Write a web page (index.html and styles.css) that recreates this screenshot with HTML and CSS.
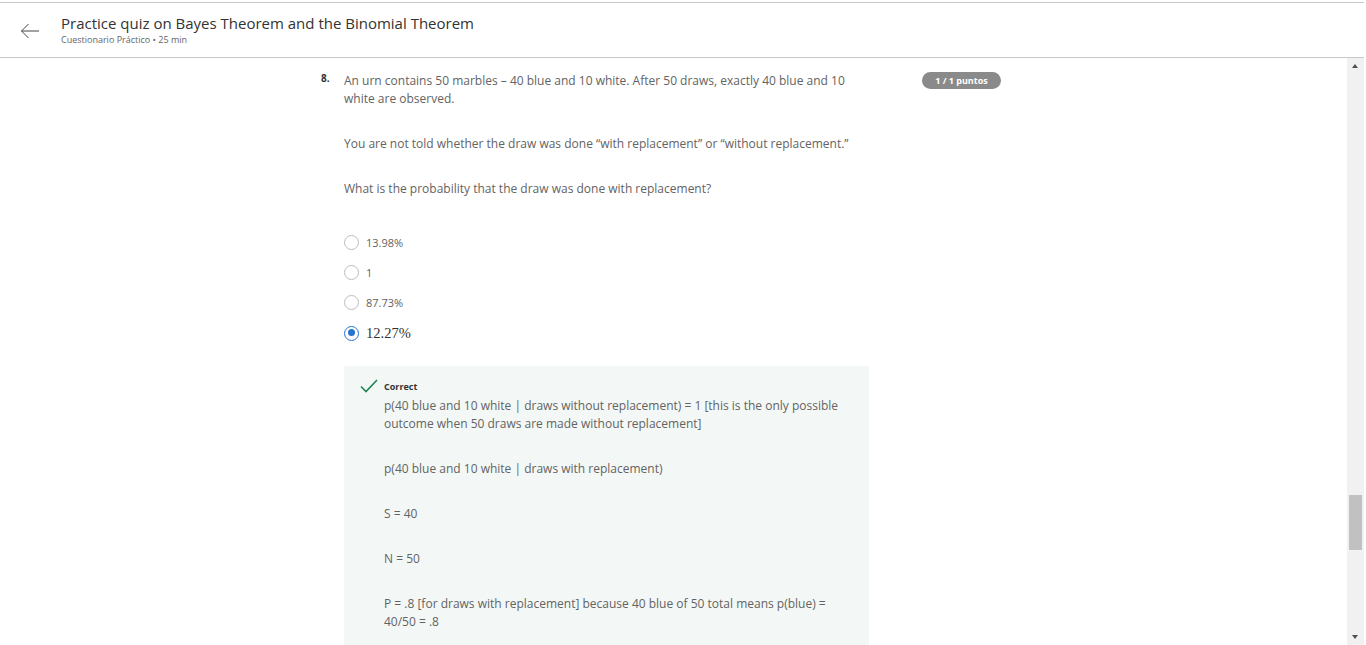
FILE: index.html
```html
<!DOCTYPE html>
<html lang="es">
<head>
<meta charset="utf-8">
<title>Practice quiz</title>
<link rel="stylesheet" href="styles.css">
</head>
<body>
<div class="page">
  <header class="topbar">
    <button class="back" aria-label="Back">
      <svg width="20" height="16" viewBox="0 0 20 16"><path d="M19 8H1.5M8.5 1L1.5 8l7 7" fill="none" stroke="#444" stroke-width="1"/></svg>
    </button>
    <div class="titles">
      <h1 class="title">Practice quiz on Bayes Theorem and the Binomial Theorem</h1>
      <div class="subtitle">Cuestionario Práctico • 25 min</div>
    </div>
  </header>
  <div class="main">
    <div class="content">
      <div class="question">
        <div class="qnum">8.</div>
        <div class="qbody">
          <p class="para">An urn contains 50 marbles – 40 blue and 10 white. After 50 draws, exactly 40 blue and 10 white are observed.</p>
          <p class="para">You are not told whether the draw was done “with replacement” or “without replacement.”</p>
          <p class="para">What is the probability that the draw was done with replacement?</p>
          <div class="options">
            <label class="option"><span class="radio"></span><span class="opt-text">13.98%</span></label>
            <label class="option"><span class="radio"></span><span class="opt-text">1</span></label>
            <label class="option"><span class="radio"></span><span class="opt-text">87.73%</span></label>
            <label class="option"><span class="radio checked"></span><span class="opt-text math">12.27%</span></label>
          </div>
          <div class="feedback">
            <svg class="check" width="18" height="14" viewBox="0 0 18 14"><path d="M1 7.5l5 5L17 1" fill="none" stroke="#1f8354" stroke-width="1.6"/></svg>
            <div class="fb-body">
              <div class="fb-label">Correct</div>
              <p class="fb-para">p(40 blue and 10 white | draws without replacement) = 1 [this is the only possible outcome when 50 draws are made without replacement]</p>
              <p class="fb-para">p(40 blue and 10 white | draws with replacement)</p>
              <p class="fb-para">S = 40</p>
              <p class="fb-para">N = 50</p>
              <p class="fb-para">P = .8 [for draws with replacement] because 40 blue of 50 total means p(blue) = 40/50 = .8</p>
            </div>
          </div>
        </div>
        <div class="badge-col"><span class="badge">1 / 1 puntos</span></div>
      </div>
    </div>
    <div class="scrollbar">
      <div class="arrow up"></div>
      <div class="track"><div class="thumb"></div></div>
      <div class="arrow down"></div>
    </div>
  </div>
</div>
</body>
</html>
```
FILE: styles.css
```css
* { box-sizing: border-box; }
html, body { margin: 0; padding: 0; background: #fff; }
body {
  font-family: "Open Sans", "Noto Sans", sans-serif;
  color: #636363;
  overflow: hidden;
}
.page {
  width: 1364px;
  height: 645px;
  padding-top: 2px;
  display: flex;
  flex-direction: column;
}
.topbar {
  height: 56px;
  border-top: 1px solid #c8c8c8;
  border-bottom: 1px solid #c8c8c8;
  display: flex;
  align-items: center;
  flex-shrink: 0;
}
.back {
  border: 0;
  background: none;
  padding: 0;
  margin-left: 20px;
  width: 20px;
  height: 16px;
  display: flex;
  margin-top: 2px;
}
.titles { margin-left: 21px; margin-top: 0; }
.title {
  margin: 0;
  font-size: 15px;
  font-weight: 400;
  color: #333;
  line-height: 19px;
}
.subtitle {
  font-size: 9px;
  color: #666;
  line-height: 13px;
}
.main {
  flex: 1;
  display: flex;
  min-height: 0;
}
.content {
  flex: 1;
  overflow: hidden;
}
.question {
  display: flex;
  padding-left: 321px;
  padding-top: 14px;
}
.qnum {
  width: 23px;
  font-size: 10px;
  font-weight: 700;
  color: #333;
  line-height: 18px;
  margin-top: -3px;
}
.qbody { width: 525px; }
.para {
  margin: 0 0 27px;
  font-size: 12px;
  line-height: 18px;
  padding-right: 14px;
}
.options { padding-top: 2px; }
.option {
  display: flex;
  align-items: center;
  height: 30.33px;
}
.radio {
  width: 15px;
  height: 15px;
  border: 1.5px solid #bdbdbd;
  border-radius: 50%;
  margin-right: 7px;
  flex-shrink: 0;
  position: relative;
}
.radio.checked { border: 1.5px solid #2a73cc; }
.radio.checked::after {
  content: "";
  position: absolute;
  left: 2.5px;
  top: 2.5px;
  width: 7px;
  height: 7px;
  border-radius: 50%;
  background: #2a73cc;
}
.opt-text { font-size: 11px; color: #636363; }
.opt-text.math {
  font-family: "Liberation Serif", "DejaVu Serif", serif;
  font-size: 14.5px;
  color: #333;
}
.feedback {
  margin-top: 18px;
  background: #f3f8f6;
  padding: 11px 0 20px 16px;
  display: flex;
}
.check { flex-shrink: 0; margin-top: 2px; margin-right: 6px; }
.fb-label {
  font-size: 9px;
  font-weight: 700;
  color: #333;
  line-height: 20px;
}
.fb-para {
  margin: 0 0 27px;
  font-size: 12px;
  line-height: 18px;
  padding-right: 24px;
}
.badge-col { padding-left: 53px; }
.badge {
  display: block;
  width: 79px;
  height: 17px;
  line-height: 17px;
  border-radius: 9px;
  background: #8a8a8a;
  color: #fff;
  font-size: 9px;
  font-weight: 700;
  text-align: center;
}
.scrollbar {
  width: 17px;
  background: #f1f1f1;
  display: flex;
  flex-direction: column;
  flex-shrink: 0;
}
.arrow { height: 17px; position: relative; }
.arrow::after {
  content: "";
  position: absolute;
  left: 5px;
  border-left: 3.5px solid transparent;
  border-right: 3.5px solid transparent;
}
.arrow.up::after { top: 6px; border-bottom: 4px solid #505050; }
.arrow.down::after { top: 7px; border-top: 4px solid #505050; }
.track { flex: 1; position: relative; }
.thumb {
  position: absolute;
  left: 2px;
  right: 2px;
  top: 420px;
  height: 55px;
  background: #c1c1c1;
}
```
